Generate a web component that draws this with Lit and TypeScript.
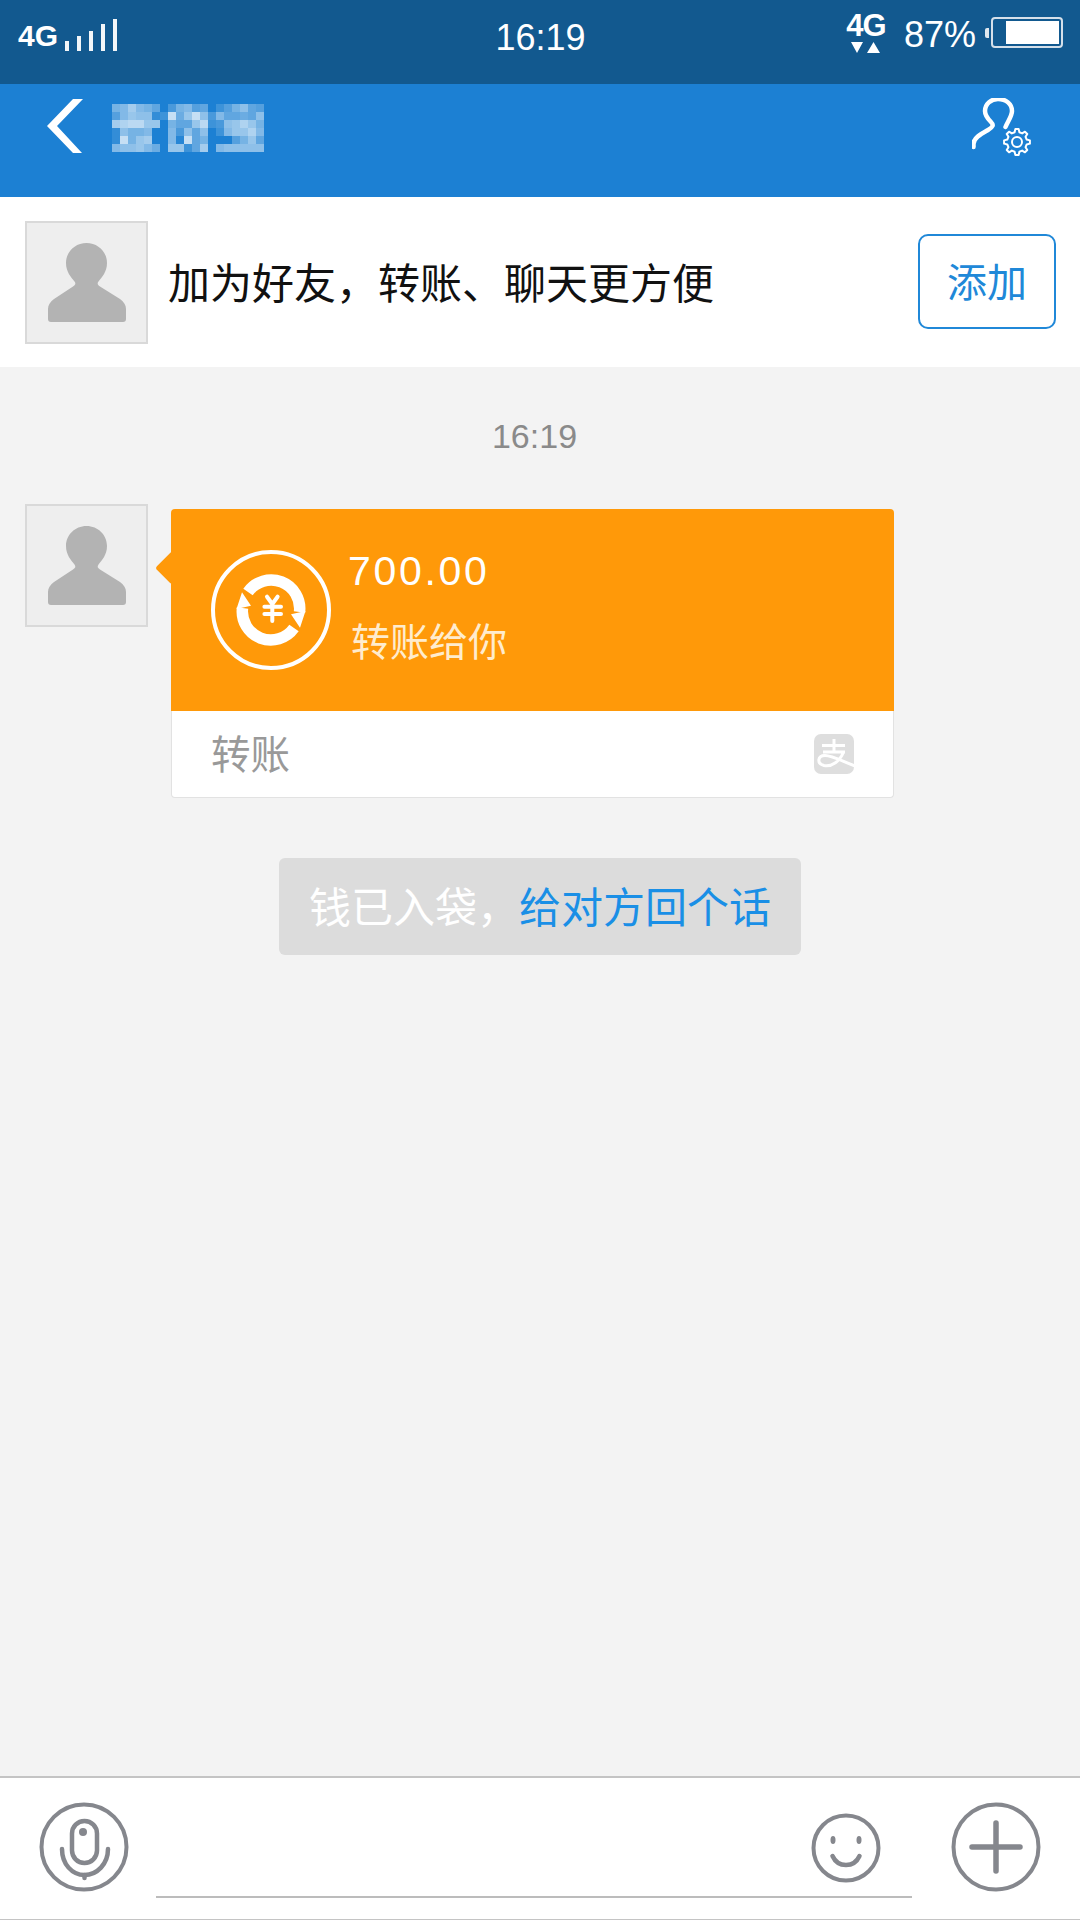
import { LitElement, html, css } from "lit";
import { customElement } from "lit/decorators.js";

const COMMA = "\uFF0C";

const MOSAIC: number[][] = [
  [.4,.45,.6,.45,.4,.3,0,.2,.4,.45,.25,.3,0,.15,.25,.4,.5,.3,.25],
  [.25,.45,.55,.5,.5,.1,.15,.75,.35,.55,.75,.5,.2,.45,.3,.3,.35,.3,.5],
  [.6,.65,.7,.7,.55,.55,0,.4,.3,.3,.55,.7,.15,.2,.5,.55,.65,.55,.4],
  [.1,.5,.4,.4,.45,0,0,.45,.2,.5,.3,.5,0,.15,.45,.55,.55,.65,.45],
  [.1,.75,.4,.55,.6,0,0,.45,.05,.75,.3,.4,0,0,0,.25,.4,.55,.3],
  [.45,.5,.5,.55,.45,.35,0,.55,.55,.15,.3,.6,0,.45,.5,.5,.5,.5,.5],
];

const personPath =
  "M61.5 22C73 22 82 31 82 42C82 51 77 56 73.500 60.500C72 62.500 72.500 64 75 65.500L95 78C99 81 101 84 101 88L101 98Q101 101 98 101L26 101Q23 101 23 98L23 88C23 84 25 81 29 78L48 65.500C50.500 64 51 62.500 49.500 60.500C46 56 41 51 41 42C41 31 50 22 61.5 22Z";

const avatar = () => html`<div class="avatar">
  <svg width="119" height="119" viewBox="2 2 119 119"><path d=${personPath} fill="#b3b3b3"></path></svg>
</div>`;

function gearPath(cx: number, cy: number): string {
  const teeth = 8;
  const rO = 13;
  const rI = 10;
  let d = "";
  for (let i = 0; i < teeth; i++) {
    const a = (i / teeth) * Math.PI * 2 - Math.PI / 2;
    const w = Math.PI / teeth;
    const pts = [
      [rI, a - w * 0.62],
      [rO, a - w * 0.32],
      [rO, a + w * 0.32],
      [rI, a + w * 0.62],
    ];
    for (const [r, t] of pts) {
      d += `${d ? "L" : "M"}${(cx + r * Math.cos(t)).toFixed(2)} ${(cy + r * Math.sin(t)).toFixed(2)}`;
    }
  }
  return d + "Z";
}

@customElement("app-root")
export class AppRoot extends LitElement {
  static styles = css`
    :host {
      display: flex;
      flex-direction: column;
      width: 1080px;
      height: 1920px;
      overflow: hidden;
      font-family: "Noto Sans CJK SC", "Liberation Sans", sans-serif;
      background: #f3f3f3;
    }
    .latin { font-family: "Liberation Sans", Arial, sans-serif; }

    .status {
      flex: none;
      height: 84px;
      box-sizing: border-box;
      background: #12598f;
      color: #fff;
      display: grid;
      grid-template-columns: 1fr auto 1fr;
      padding: 0 17px 0 18px;
      align-items: start;
    }
    .st-left { display: flex; align-items: flex-end; height: 51px; }
    .st-4g { font-size: 30px; font-weight: 700; line-height: 30px; width: 47px; }
    .bars { display: flex; align-items: flex-end; gap: 8px; height: 33px; }
    .bar { width: 4px; background: #f2f6f9; }
    .st-time { font-size: 36px; line-height: 40px; margin-top: 18px; }
    .st-right { display: flex; justify-content: flex-end; align-items: flex-start; }
    .net { display: flex; flex-direction: column; align-items: center; width: 40px; margin-top: 13px; }
    .net-t { font-size: 31px; font-weight: 700; line-height: 26px; letter-spacing: -1px; }
    .net-arrows { display: block; margin-top: 3px; }
    .pct { font-size: 36px; line-height: 40px; margin: 15px 0 0 18px; }
    .batt-nub { width: 4px; height: 10px; background: #dfe8ef; margin: 28px 2px 0 9px; border-radius: 2px 0 0 2px; }
    .batt {
      width: 72px;
      height: 31px;
      box-sizing: border-box;
      margin-top: 17px;
      border: 2px solid #d5e0ea;
      border-radius: 4px;
      padding: 2px;
      display: flex;
      justify-content: flex-end;
    }
    .batt-fill { width: 53px; background: #fff; }

    .header {
      flex: none;
      height: 113px;
      box-sizing: border-box;
      background: #1c80d3;
      display: flex;
      align-items: flex-start;
      padding: 15px 48px 0 47px;
    }
    .header svg { display: block; }
    .mosaic {
      display: grid;
      grid-template-columns: repeat(19, 8px);
      grid-auto-rows: 8px;
      margin: 5px 0 0 29px;
    }
    .spacer { flex: 1; }
    .friend-ic { margin-top: -1px; }

    .friend {
      flex: none;
      height: 170px;
      box-sizing: border-box;
      background: #fff;
      display: flex;
      align-items: center;
      padding: 0 24px 0 25px;
    }
    .avatar {
      flex: none;
      width: 123px;
      height: 123px;
      box-sizing: border-box;
      background: #eee;
      border: 2px solid #d9d9d9;
    }
    .avatar svg { display: block; }
    .friend-t { font-size: 42px; line-height: 60px; color: #111; margin: -3px 0 0 20px; flex: 1; white-space: nowrap; }
    .add {
      width: 138px;
      height: 95px;
      box-sizing: border-box;
      margin-top: -1px;
      border: 2px solid #2088d8;
      border-radius: 10px;
      color: #2088d8;
      font-size: 40px;
      padding-bottom: 3px;
      display: flex;
      align-items: center;
      justify-content: center;
    }

    .chat {
      flex: 1;
      min-height: 0;
      display: flex;
      flex-direction: column;
      padding: 49px 25px 0;
      background: #f3f3f3;
    }
    .time { font-size: 34px; line-height: 40px; color: #8a8a8a; text-align: center; padding-right: 11px; }
    .row { display: flex; gap: 23px; margin-top: 48px; }
    .bubble { position: relative; width: 723px; margin-top: 5px; }
    .bubble::before {
      content: "";
      position: absolute;
      left: -11px;
      top: 47px;
      width: 24px;
      height: 24px;
      background: #ff9909;
      border-radius: 3px;
      transform: rotate(45deg);
    }
    .b-top {
      position: relative;
      height: 202px;
      box-sizing: border-box;
      background: #ff9909;
      border-radius: 4px 4px 0 0;
      display: flex;
      align-items: flex-start;
      padding: 39px 0 0 38px;
      color: #fff;
    }
    .b-top svg { display: block; flex: none; }
    .b-text { margin: -1px 0 0 15px; }
    .amount { font-size: 41px; line-height: 48px; letter-spacing: 2.7px; }
    .b-sub { font-size: 39px; line-height: 56px; color: #ffeccd; margin: 16px 0 0 3px; }
    .b-foot {
      height: 87px;
      box-sizing: border-box;
      background: #fff;
      border: 1px solid #e2e2e2;
      border-top: none;
      border-radius: 0 0 4px 4px;
      display: flex;
      align-items: center;
      justify-content: space-between;
      padding: 0 39px 0 39px;
      color: #999;
      font-size: 39.500px;
    }
    .b-foot span { padding-bottom: 5px; }
    .pill {
      align-self: center;
      width: 522px;
      height: 97px;
      box-sizing: border-box;
      background: #dcdcdc;
      border-radius: 6px;
      margin-top: 60px;
      padding: 0 0 5px 30px;
      display: flex;
      align-items: center;
      color: #fff;
      font-size: 42px;
      white-space: nowrap;
    }
    .pill span { color: #1a8fe6; }

    .bottom {
      flex: none;
      height: 144px;
      box-sizing: border-box;
      background: #fff;
      border-top: 2px solid #c4c4c4;
      border-bottom: 1px solid #c4c4c4;
      display: flex;
      align-items: flex-start;
      padding: 24px 0 0 39px;
    }
    .bottom svg { display: block; flex: none; }
    .input {
      width: 756px;
      height: 96px;
      margin: 0 -101px 0 27px;
      border-bottom: 2px solid #bcbcbc;
      box-sizing: border-box;
      flex: none;
    }
    .ic-smile { margin-top: 11px; }
    .ic-plus { margin-left: 70px; }
  `;

  render() {
    const barHeights = [10, 15, 20, 27, 32];
    return html`
      <div class="status latin">
        <div class="st-left">
          <span class="st-4g">4G</span>
          <div class="bars">
            ${barHeights.map((h) => html`<div class="bar" style="height:${h}px"></div>`)}
          </div>
        </div>
        <div class="st-time">16:19</div>
        <div class="st-right">
          <div class="net">
            <div class="net-t">4G</div>
            <svg class="net-arrows" width="30" height="11" viewBox="0 0 30 11">
              <path d="M0 0H12L6 11Z M16 11H29L22.5 0Z" fill="#fff"></path>
            </svg>
          </div>
          <div class="pct">87%</div>
          <div class="batt-nub"></div>
          <div class="batt"><div class="batt-fill"></div></div>
        </div>
      </div>

      <div class="header">
        <svg width="36" height="54" viewBox="0 0 36 54">
          <path d="M36 0H26L0 27L26 54H35L10 27Z" fill="#fff"></path>
        </svg>
        <div class="mosaic">
          ${MOSAIC.flat().map((a) => html`<i style="background:rgba(255,255,255,${a})"></i>`)}
        </div>
        <div class="spacer"></div>
        <svg class="friend-ic" width="60" height="60" viewBox="972 97 60 60" fill="none" stroke="#fff">
          <path d="M973.5 146V143C973.5 137 981 133 988 129C993 126 994 124 991 121C987 117 985 114 985 110C985 103 991 98 998 98C1006 98 1012 103 1012 110C1012 115 1008 120 1005.5 126" stroke-width="4.500" stroke-linecap="round"></path>
          <path d=${gearPath(1017, 141)} stroke-width="2" stroke-linejoin="round"></path>
          <circle cx="1017" cy="141" r="5" stroke-width="2"></circle>
        </svg>
      </div>

      <div class="friend">
        ${avatar()}
        <div class="friend-t">加为好友${COMMA}转账、聊天更方便</div>
        <div class="add">添加</div>
      </div>

      <div class="chat">
        <div class="time latin">16:19</div>
        <div class="row">
          ${avatar()}
          <div class="bubble">
            <div class="b-top">
              <svg width="124" height="124" viewBox="0 0 124 124" fill="none" stroke="#fff">
                <circle cx="62" cy="62" r="58" stroke-width="4"></circle>
                <path d="M39 44A28.500 28.500 0 0 1 90.500 64" stroke-width="11.500"></path>
                <path d="M85 80A28.500 28.500 0 0 1 33.500 60" stroke-width="11.500"></path>
                <path d="M82 66.3L96.500 63L91 79.7Z M42 57.7L27.500 61L33 44.3Z" fill="#fff" stroke="none"></path>
                <path d="M58 48.7L63.3 56L68.6 48.7M55.4 58.7H72M55.4 66H72M63.3 56V73" stroke-width="4" stroke-linecap="round"></path>
              </svg>
              <div class="b-text">
                <div class="amount latin">700.00</div>
                <div class="b-sub">转账给你</div>
              </div>
            </div>
            <div class="b-foot">
              <span>转账</span>
              <svg width="40" height="40" viewBox="0 0 40 40">
                <defs><clipPath id="ali"><rect width="40" height="40" rx="7"></rect></clipPath></defs>
                <g clip-path="url(#ali)">
                  <rect width="40" height="40" fill="#dedede"></rect>
                  <path d="M8 11.500H31M20 5V18M9 18H31M29.500 18C26 27 18 33 10 31.500C2.500 29.500 3.500 21.500 11 21.500C18 21.500 28 27 41 32" fill="none" stroke="#fff" stroke-width="3"></path>
                </g>
              </svg>
            </div>
          </div>
        </div>
        <div class="pill">钱已入袋${COMMA}<span>给对方回个话</span></div>
      </div>

      <div class="bottom">
        <svg width="90" height="90" viewBox="39 1802 90 90" fill="none" stroke="#85878d" stroke-width="4">
          <circle cx="84" cy="1847" r="42.5"></circle>
          <rect x="72" y="1821" width="25" height="42" rx="12.5" stroke-width="4.500"></rect>
          <circle cx="83" cy="1832" r="4" fill="#85878d" stroke="none"></circle>
          <path d="M62 1849C62 1864 72 1875 84.500 1875C97 1875 108 1864 108 1849" stroke-width="4.500" stroke-linecap="round"></path>
          <path d="M84.500 1875V1878" stroke-width="4.500" stroke-linecap="round"></path>
        </svg>
        <div class="input"></div>
        <svg class="ic-smile" width="70" height="70" viewBox="811 1813 70 70" fill="none" stroke="#85878d" stroke-width="4">
          <circle cx="846" cy="1848" r="32.500"></circle>
          <ellipse cx="833" cy="1840" rx="2.500" ry="4" fill="#85878d" stroke="none"></ellipse>
          <ellipse cx="859" cy="1840" rx="2.500" ry="4" fill="#85878d" stroke="none"></ellipse>
          <path d="M832.500 1856C838 1868 854 1868 859.500 1856" stroke-width="4.500" stroke-linecap="round"></path>
        </svg>
        <svg class="ic-plus" width="90" height="90" viewBox="951 1802 90 90" fill="none" stroke="#85878d">
          <circle cx="996" cy="1847" r="42.500" stroke-width="4"></circle>
          <path d="M972 1847H1020M996 1823V1871" stroke-width="5.500" stroke-linecap="round"></path>
        </svg>
      </div>
    `;
  }
}
